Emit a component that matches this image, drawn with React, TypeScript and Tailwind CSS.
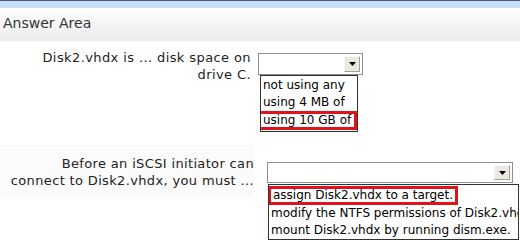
import React from "react";

const labelFont = { fontFamily: '"DejaVu Sans", Verdana, sans-serif' };

function Arrow() {
  return (
    <div className="absolute right-[2px] top-[2px] bottom-[2px] w-[16px] bg-[#ebe9e1] border border-t-[#f8f8f4] border-l-[#f8f8f4] border-b-[#a09f98] border-r-[#a09f98] flex items-center justify-center">
      <svg width="7" height="4" viewBox="0 0 7 4">
        <polygon points="0,0 7,0 3.5,4" fill="#000" />
      </svg>
    </div>
  );
}

export default function App() {
  return (
    <div className="w-[520px] h-[240px] bg-white overflow-hidden relative" style={labelFont}>
      <div className="h-px bg-[#44608c]" />
      <div className="h-[7px] bg-[#c9def6]" />
      <div className="h-[33px] bg-gradient-to-b from-[#fefefe] to-[#ebebeb] pl-[3px] pt-[7px] text-[14px] leading-[17px] text-[#333]">
        Answer Area
      </div>

      {/* Row 1 */}
      <div className="h-[104px] flex pt-[8px]">
        <div className="w-[251px] text-right text-[13px] leading-[17px] tracking-[0.4px] text-[#222]">
          Disk2.vhdx is ... disk space on
          <br />
          drive C.
        </div>
        <div className="relative ml-[7px] mt-[4px] w-[105px] h-[22px] border border-[#8e8e8e] bg-white">
          <Arrow />
          <div className="absolute left-[1px] top-[21px] w-[98px] border border-[#333] bg-white text-[12px] leading-[17px] text-black pl-[2px] pt-[1px] pb-[1px] whitespace-nowrap overflow-hidden">
            <div>not using any</div>
            <div>using 4 MB of</div>
            <div className="-ml-[5px] pl-[2px] border-[3px] border-[#e1121c] leading-[13px] h-[19px]">using 10 GB of</div>
          </div>
        </div>
      </div>

      {/* Row 2 */}
      <div className="flex items-start">
        <div className="w-[254px] h-[53px] pt-[10px] text-right text-[13px] leading-[17px] tracking-[0.35px] text-[#222] bg-[#fbfbfb]">
          Before an iSCSI initiator can
          <br />
          connect to Disk2.vhdx, you must ...
        </div>
        <div className="relative ml-[13px] mt-[17px] w-[246px] h-[21px] border border-[#8e8e8e] bg-white">
          <Arrow />
          <div className="absolute left-[0px] top-[21px] w-[251px] border border-[#333] bg-white text-[12px] leading-[17px] text-black pl-[2px] pt-[1px] whitespace-nowrap overflow-hidden">
            <div className="inline-block -ml-[3px] pl-[2px] pr-[2px] border-[3px] border-[#e1121c] leading-[13px] h-[19px]">assign Disk2.vhdx to a target.</div>
            <div>modify the NTFS permissions of Disk2.vhdx</div>
            <div>mount Disk2.vhdx by running dism.exe.</div>
          </div>
        </div>
      </div>
    </div>
  );
}
